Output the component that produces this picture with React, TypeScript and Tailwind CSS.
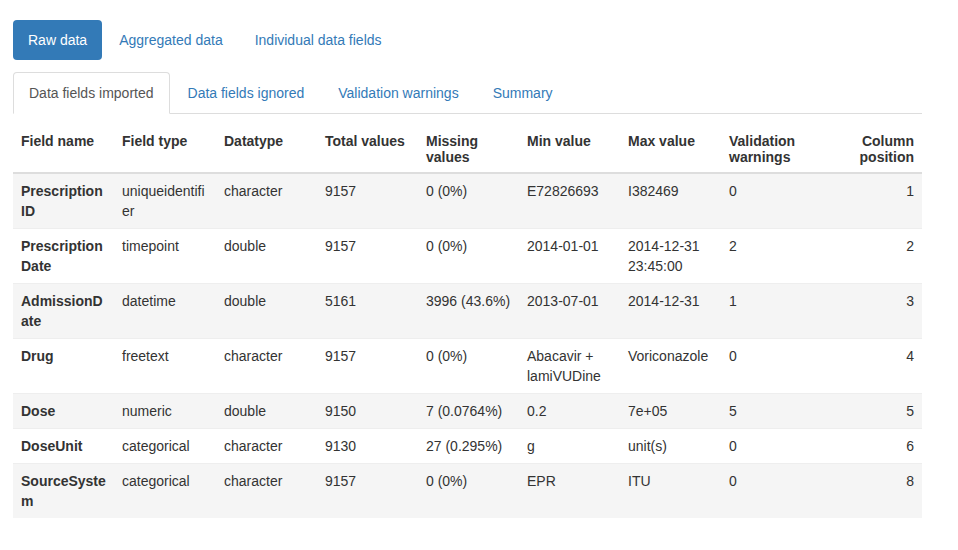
import React from "react";

type Row = {
  name: string;
  type: string;
  datatype: string;
  total: string;
  missing: string;
  min: string;
  max: string;
  warnings: string;
  position: string;
};

const rows: Row[] = [
  { name: "Prescription ID", type: "uniqueidentifier", datatype: "character", total: "9157", missing: "0 (0%)", min: "E72826693", max: "I382469", warnings: "0", position: "1" },
  { name: "Prescription Date", type: "timepoint", datatype: "double", total: "9157", missing: "0 (0%)", min: "2014-01-01", max: "2014-12-31 23:45:00", warnings: "2", position: "2" },
  { name: "AdmissionDate", type: "datetime", datatype: "double", total: "5161", missing: "3996 (43.6%)", min: "2013-07-01", max: "2014-12-31", warnings: "1", position: "3" },
  { name: "Drug", type: "freetext", datatype: "character", total: "9157", missing: "0 (0%)", min: "Abacavir + lamiVUDine", max: "Voriconazole", warnings: "0", position: "4" },
  { name: "Dose", type: "numeric", datatype: "double", total: "9150", missing: "7 (0.0764%)", min: "0.2", max: "7e+05", warnings: "5", position: "5" },
  { name: "DoseUnit", type: "categorical", datatype: "character", total: "9130", missing: "27 (0.295%)", min: "g", max: "unit(s)", warnings: "0", position: "6" },
  { name: "SourceSystem", type: "categorical", datatype: "character", total: "9157", missing: "0 (0%)", min: "EPR", max: "ITU", warnings: "0", position: "8" },
];

const pills = ["Raw data", "Aggregated data", "Individual data fields"];
const tabs = ["Data fields imported", "Data fields ignored", "Validation warnings", "Summary"];

const headers = [
  "Field name",
  "Field type",
  "Datatype",
  "Total values",
  "Missing values",
  "Min value",
  "Max value",
  "Validation warnings",
];

export default function App() {
  return (
    <div className="min-h-[550px] bg-white px-[13px] pt-[20px] text-[14px] leading-[20px] text-[#333] font-['Liberation_Sans',Arial,sans-serif]">
      <div className="w-[909px]">
        {/* Pills */}
        <ul className="flex gap-[2px]">
          {pills.map((p, i) => (
            <li key={p}>
              <a
                className={
                  i === 0
                    ? "block rounded-[4px] bg-[#337ab7] px-[15px] py-[10px] text-white"
                    : "block rounded-[4px] px-[15px] py-[10px] text-[#337ab7]"
                }
              >
                {p}
              </a>
            </li>
          ))}
        </ul>

        {/* Tabs */}
        <ul className="mt-[12px] flex border-b border-[#ddd]">
          {tabs.map((t, i) => (
            <li key={t} className="-mb-px">
              <a
                className={
                  i === 0
                    ? "mr-[2px] block rounded-t-[4px] border border-[#ddd] border-b-transparent bg-white px-[15px] py-[10px] text-[#555]"
                    : "mr-[2px] block rounded-t-[4px] border border-transparent px-[15px] py-[10px] text-[#337ab7]"
                }
              >
                {t}
              </a>
            </li>
          ))}
        </ul>

        {/* Table */}
        <table className="mt-[10px] w-[909px] table-fixed border-collapse">
          <colgroup>
            <col className="w-[101px]" />
            <col className="w-[102px]" />
            <col className="w-[101px]" />
            <col className="w-[101px]" />
            <col className="w-[101px]" />
            <col className="w-[101px]" />
            <col className="w-[101px]" />
            <col className="w-[101px]" />
            <col className="w-[100px]" />
          </colgroup>
          <thead>
            <tr className="border-b-2 border-[#ddd]">
              {headers.map((h) => (
                <th key={h} className="px-[8px] pt-[9px] pb-[7px] text-left align-top font-bold leading-[16px]">
                  {h}
                </th>
              ))}
              <th className="px-[8px] pt-[9px] pb-[7px] text-right align-top font-bold leading-[16px]">
                Column position
              </th>
            </tr>
          </thead>
          <tbody>
            {rows.map((r, i) => (
              <tr
                key={r.name}
                className={i % 2 === 0 ? "border-t border-[#eee] bg-[#f5f5f5]" : "border-t border-[#eee] bg-white"}
              >
                <td className="px-[8px] py-[7px] align-top font-bold break-words">{r.name}</td>
                <td className="px-[8px] py-[7px] align-top break-words">{r.type}</td>
                <td className="px-[8px] py-[7px] align-top break-words">{r.datatype}</td>
                <td className="px-[8px] py-[7px] align-top break-words">{r.total}</td>
                <td className="px-[8px] py-[7px] align-top break-words">{r.missing}</td>
                <td className="px-[8px] py-[7px] align-top break-words">{r.min}</td>
                <td className="px-[8px] py-[7px] align-top break-words">{r.max}</td>
                <td className="px-[8px] py-[7px] align-top break-words">{r.warnings}</td>
                <td className="px-[8px] py-[7px] text-right align-top break-words">{r.position}</td>
              </tr>
            ))}
          </tbody>
        </table>
      </div>
    </div>
  );
}
